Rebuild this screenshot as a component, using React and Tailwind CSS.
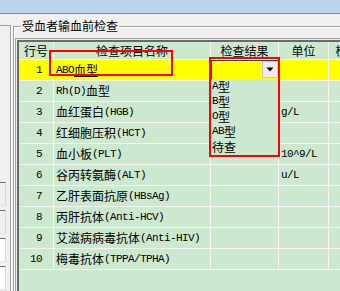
import React from "react";

const CJK_SPLIT = /([\u3400-\u9fff]+)/;
const IS_CJK = /^[\u3400-\u9fff]/;

function T({ text, underlineCjk = false }) {
  const parts = text.split(CJK_SPLIT).filter(Boolean);
  return (
    <>
      {parts.map((p, i) =>
        IS_CJK.test(p) ? (
          <span key={i} className={underlineCjk ? "underline underline-offset-[1px]" : ""}>{p}</span>
        ) : (
          <span key={i} className="font-['Liberation_Mono',monospace] text-[11px] tracking-[-0.6px]">
            {p}
          </span>
        )
      )}
    </>
  );
}

const rows = [
  { n: 1, name: "ABO血型", unit: "" },
  { n: 2, name: "Rh(D)血型", unit: "" },
  { n: 3, name: "血红蛋白(HGB)", unit: "g/L" },
  { n: 4, name: "红细胞压积(HCT)", unit: "" },
  { n: 5, name: "血小板(PLT)", unit: "10^9/L" },
  { n: 6, name: "谷丙转氨酶(ALT)", unit: "u/L" },
  { n: 7, name: "乙肝表面抗原(HBsAg)", unit: "" },
  { n: 8, name: "丙肝抗体(Anti-HCV)", unit: "" },
  { n: 9, name: "艾滋病病毒抗体(Anti-HIV)", unit: "" },
  { n: 10, name: "梅毒抗体(TPPA/TPHA)", unit: "" },
];

const line = "border-[#f4f4f4]";

function Combo() {
  return (
    <div className="flex h-[19px] w-full self-start border-t border-l border-[#404040] bg-[#ffff00]">
      <div className="flex-1" />
      <div className="flex h-[17px] w-[16px] items-center justify-center border border-[#c8c8c8] bg-[#ececec]">
        <svg width="8" height="5" viewBox="0 0 8 5">
          <polygon points="0.5,0.5 7.5,0.5 4,4.5" fill="#000" />
        </svg>
      </div>
    </div>
  );
}

export default function App() {
  return (
    <div className="relative flex h-[291px] w-[340px] flex-col overflow-hidden bg-[#f0f0f0] font-['Noto_Sans_CJK_SC',sans-serif] text-[12px] leading-[12px] text-black">
      <div className="h-[13px] shrink-0 bg-[#bdd3eb]" />
      <div className="h-[1px] shrink-0 bg-[#7c8a99]" />
      <div className="flex flex-1">
        {/* left panel */}
        <div className="mt-[11px] flex w-[11px] shrink-0 flex-col border-t border-r border-[#a0a0a0] shadow-[1px_1px_0_#fff]">
          <div className="mt-[156px] flex flex-col gap-[4px]">
            <div className="h-[24px] w-[6px] border-t border-r border-b border-t-[#6e6e6e] border-r-[#d8d8d8] border-b-[#e4e4e4] bg-[#f0f0f0]" />
            <div className="h-[24px] w-[6px] border-t border-r border-b border-t-[#6e6e6e] border-r-[#d8d8d8] border-b-[#e4e4e4] bg-[#f0f0f0]" />
            <div className="h-[24px] w-[6px] border-t border-r border-b border-t-[#6e6e6e] border-r-[#d8d8d8] border-b-[#e4e4e4] bg-white" />
            <div className="h-[24px] w-[6px] border-t border-r border-b border-t-[#6e6e6e] border-r-[#d8d8d8] border-b-[#e4e4e4] bg-white" />
          </div>
        </div>
        {/* group box */}
        <fieldset className="ml-[2px] mt-[6px] flex min-w-0 flex-1 flex-col border-t border-l border-[#a0a0a0] shadow-[inset_1px_1px_0_#fff]">
          <legend className="ml-[7px] px-[1px] text-[12px] leading-[12px]">受血者输血前检查</legend>
          <div className="ml-[1px] mt-[6px] flex flex-1 flex-col border-t border-l border-[#a0a0a0] pt-[1px] pl-[1px]">
            <div className="flex flex-1 flex-col overflow-hidden border-t-2 border-l-2 border-[#6a6a6a] bg-[#cce8cf]">
              {/* header */}
              <div className={`flex h-[18px] shrink-0 border-b ${line}`}>
                <div className={`flex w-[35px] shrink-0 items-center justify-center border-r ${line}`}>行号</div>
                <div className={`flex w-[157px] shrink-0 items-center justify-center border-r ${line}`}>检查项目名称</div>
                <div className={`flex w-[68px] shrink-0 items-center justify-center border-r ${line}`}>检查结果</div>
                <div className={`flex w-[50px] shrink-0 items-center justify-center border-r ${line}`}>单位</div>
                <div className={`flex w-[62px] shrink-0 items-center justify-center border-r ${line}`}>检查方法</div>
              </div>
              {rows.map((r) => (
                <div
                  key={r.n}
                  className={`flex h-[21px] shrink-0 border-b ${line} ${r.n === 1 ? "bg-[#ffff00]" : ""}`}
                >
                  <div className={`flex w-[35px] shrink-0 items-center justify-end border-r pr-[11px] ${line}`}>
                    <span className="font-['Liberation_Mono',monospace] text-[11px] tracking-[-0.6px]">{r.n}</span>
                  </div>
                  <div className={`flex w-[157px] shrink-0 items-center overflow-hidden whitespace-nowrap border-r pl-[2px] ${line}`}>
                    <T text={r.name} underlineCjk={r.n === 1} />
                  </div>
                  <div className={`flex w-[68px] shrink-0 border-r ${line}`}>
                    {r.n === 1 ? <Combo /> : null}
                  </div>
                  <div className={`flex w-[50px] shrink-0 items-center whitespace-nowrap border-r pl-[2px] ${line}`}>
                    <T text={r.unit} />
                  </div>
                  <div className={`w-[62px] shrink-0 border-r ${line}`} />
                </div>
              ))}
              <div className="flex-1" />
            </div>
          </div>
        </fieldset>
      </div>

      {/* dropdown list */}
      <div className="absolute left-[211px] top-[79px] flex h-[77px] w-[67px] flex-col border-b border-[#646464] bg-[#cce8cf] pl-[1px] text-[12px] leading-[13px]">
        {["A型", "B型", "O型", "AB型", "待查"].map((o) => (
          <div key={o} className="flex h-[15px] items-center overflow-hidden whitespace-nowrap">
            <T text={o} />
          </div>
        ))}
      </div>

      {/* red highlight boxes */}
      <div className="pointer-events-none absolute left-[49px] top-[50px] h-[26px] w-[124px] border-2 border-[#ff0000]" />
      <div className="pointer-events-none absolute left-[209px] top-[57px] h-[100px] w-[71px] border-2 border-[#ff0000]" />
    </div>
  );
}
